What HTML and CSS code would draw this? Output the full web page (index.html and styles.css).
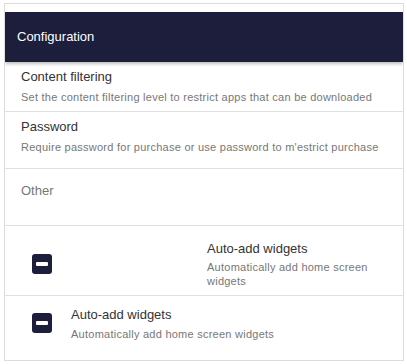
FILE: index.html
```html
<!DOCTYPE html>
<html lang="en">
<head>
    <meta charset="UTF-8">
    <title>Configuration</title>
    <link rel="stylesheet" href="styles.css">
</head>
<body>
    <div class="panel">
        <div class="panel-header">Configuration</div>

        <div class="row row-filter">
            <div class="row-title">Content filtering</div>
            <div class="row-desc">Set the content filtering level to restrict apps that can be downloaded</div>
        </div>

        <div class="row row-password">
            <div class="row-title">Password</div>
            <div class="row-desc">Require password for purchase or use password to m'estrict purchase</div>
        </div>

        <div class="row row-other">
            <div class="row-title muted">Other</div>
        </div>

        <div class="row toggle-row toggle-wide">
            <span class="check"><span class="check-bar"></span></span>
            <div class="toggle-text">
                <div class="row-title">Auto-add widgets</div>
                <div class="row-desc">Automatically add home screen widgets</div>
            </div>
        </div>

        <div class="row toggle-row toggle-tight">
            <span class="check"><span class="check-bar"></span></span>
            <div class="toggle-text">
                <div class="row-title">Auto-add widgets</div>
                <div class="row-desc">Automatically add home screen widgets</div>
            </div>
        </div>
    </div>
</body>
</html>
```

FILE: styles.css
```css
body {
    margin: 0;
    padding: 3px 3px 3px 4px;
    font-family: "Liberation Sans", Arial, sans-serif;
    background: white;
}
.panel {
    width: 398px;
    height: 348px;
    border: 1px solid #dcdcdc;
    padding-top: 8px;
    overflow: hidden;
}
.panel-header {
    position: relative;
    height: 50px;
    line-height: 50px;
    padding-left: 12px;
    background: #1c1e3c;
    color: white;
    font-size: 13px;
    box-shadow: 0 2px 3px rgba(0,0,0,0.25);
}
.row {
    border-bottom: 1px solid #e0e0e0;
    padding-left: 16px;
    box-sizing: border-box;
}
.row-title {
    font-size: 13px;
    line-height: 16px;
    color: #333;
}
.row-desc {
    font-size: 11px;
    line-height: 14px;
    color: #777;
    letter-spacing: 0.25px;
}
.muted {
    color: #777;
}
.row-filter {
    height: 50px;
    padding-top: 7px;
}
.row-filter .row-desc,
.row-password .row-desc {
    margin-top: 5px;
}
.row-password {
    height: 57px;
    padding-top: 7px;
}
.row-other {
    height: 57px;
    padding-top: 14px;
}
.toggle-row {
    display: flex;
    align-items: flex-start;
    padding-left: 27px;
}
.toggle-wide {
    height: 70px;
    padding-top: 28px;
}
.toggle-wide .toggle-text {
    margin-left: 155px;
    width: 175px;
    margin-top: -13px;
}
.toggle-wide .row-desc {
    margin-top: 3px;
}
.toggle-tight {
    height: 65px;
    border-bottom: none;
    padding-top: 17px;
}
.toggle-tight .toggle-text {
    margin-left: 19px;
    margin-top: -6px;
}
.toggle-tight .row-desc {
    margin-top: 4px;
}
.check {
    flex: none;
    width: 20px;
    height: 20px;
    border-radius: 3px;
    background: #1c1e3c;
    display: flex;
    align-items: center;
    justify-content: center;
}
.check-bar {
    width: 12px;
    height: 4px;
    background: white;
    border-radius: 1px;
}
```
